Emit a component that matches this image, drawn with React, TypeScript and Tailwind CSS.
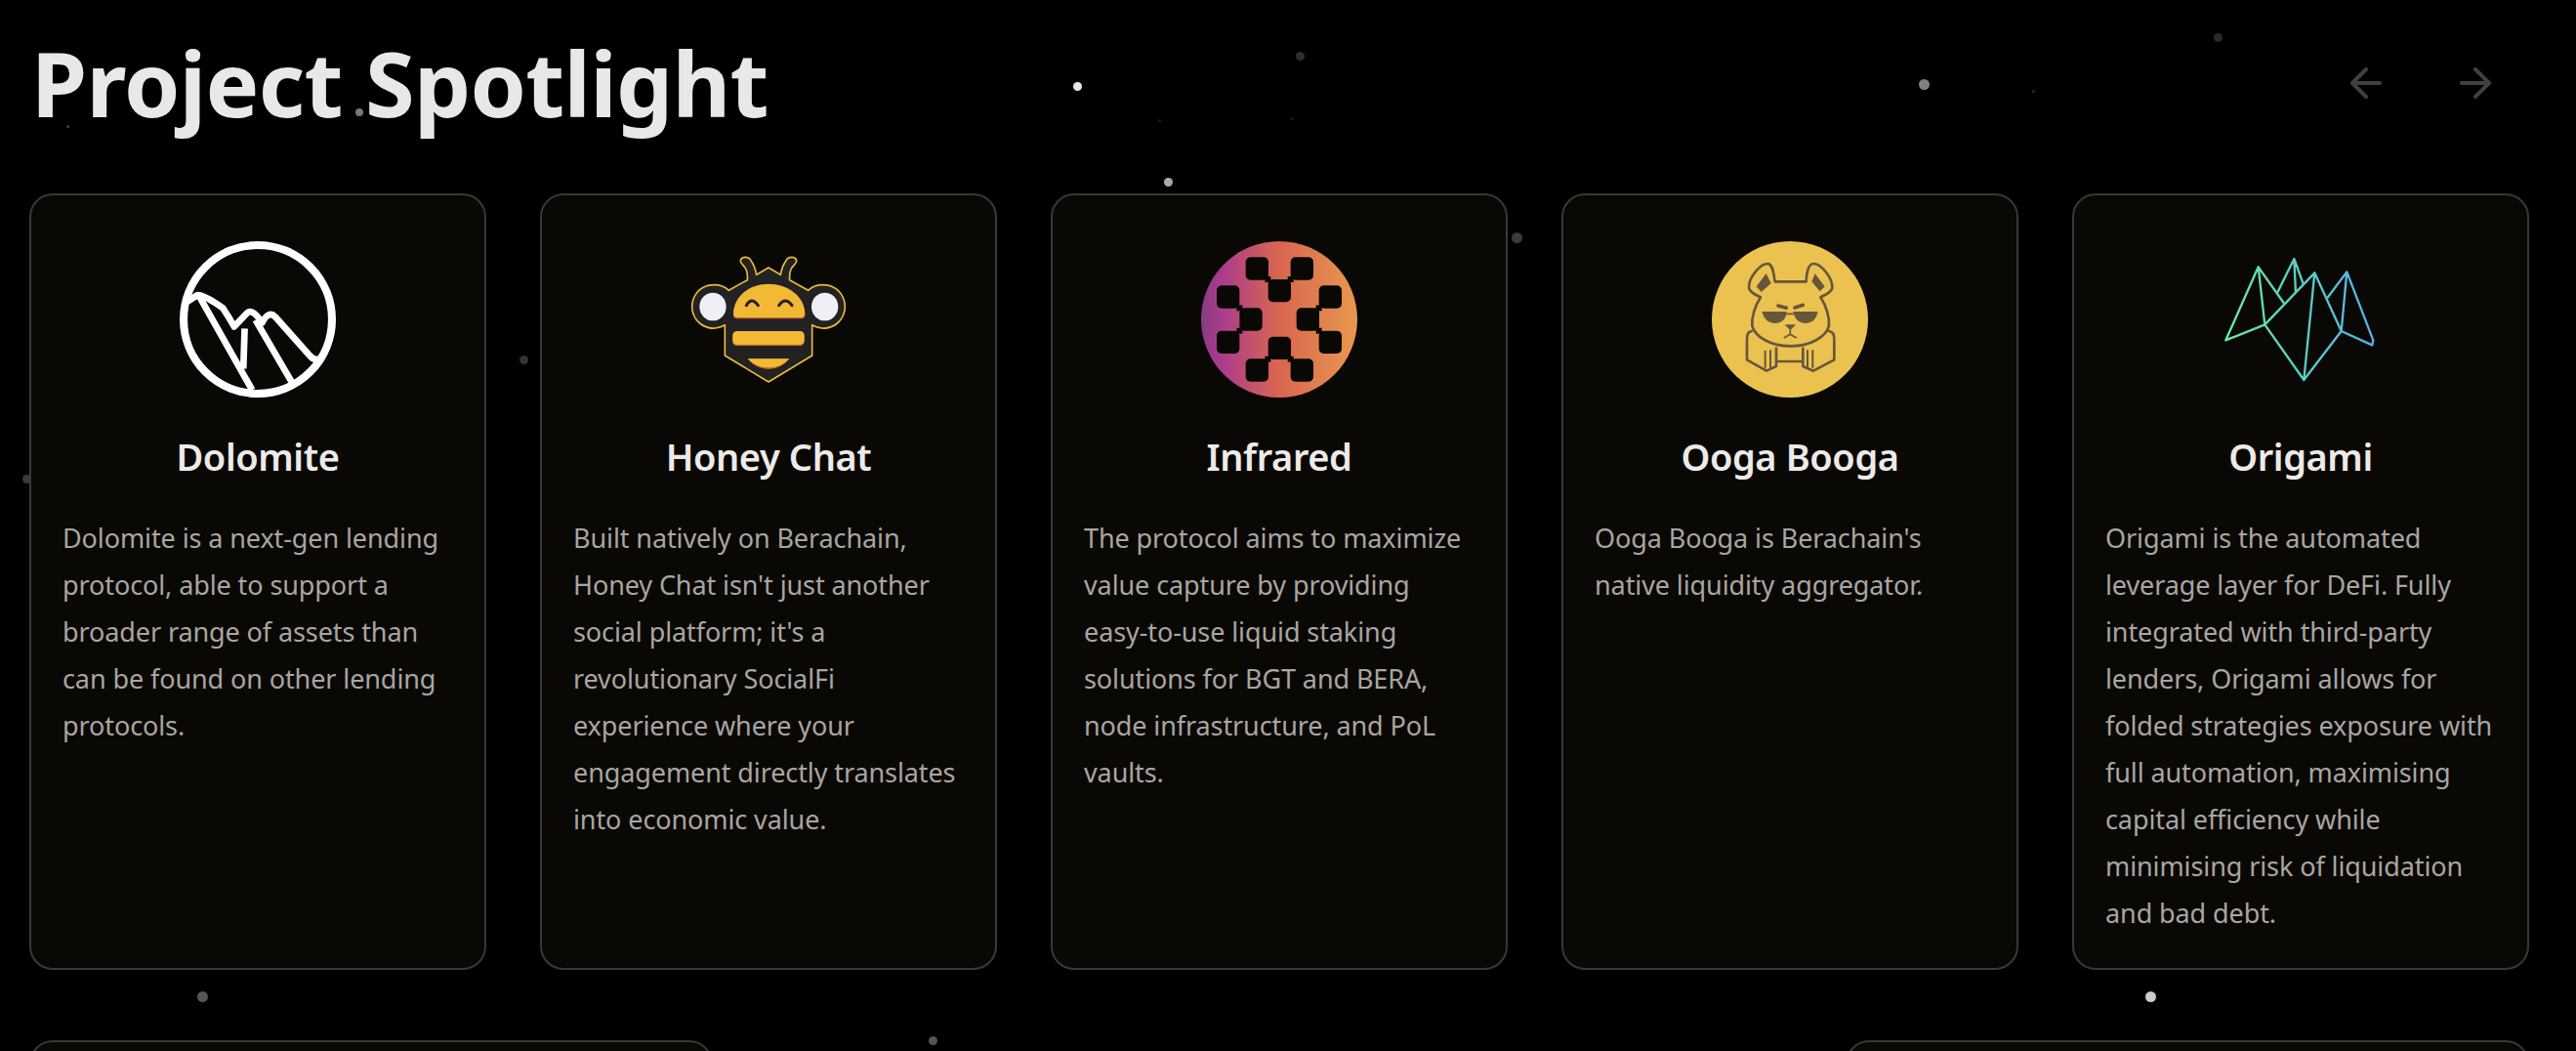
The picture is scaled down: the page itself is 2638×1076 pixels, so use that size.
import { ArrowLeft, ArrowRight } from "lucide-react";

const font = { fontFamily: '"Noto Sans", sans-serif' };

function Dolomite() {
  return (
    <svg viewBox="74 52 476 476" className="h-full w-full" fill="none" stroke="#fff" strokeLinecap="round" strokeLinejoin="round">
      <circle cx="312" cy="290" r="226" strokeWidth="24" />
      <path d="M100 234 L128 216 Q150 216 205 255 Q225 285 240 312 L280 270 Q296 256 325 300 Q345 262 365 282 L470 400 Q485 418 505 410" strokeWidth="20" />
      <path d="M135 222 L295 505 M272 318 L268 440 M305 292 L415 480" strokeWidth="20" strokeLinecap="butt" />
    </svg>
  );
}

function Bee() {
  return (
    <svg viewBox="50 21 480 480" className="h-full w-full">
      <path
        d="M290 102 L253 124 C250 105 243 90 236 80 C228 65 204 68 204 82 C204 90 215 95 220 105 C225 115 226 128 225 140 L168 172 C150 155 125 152 100 158 C70 168 55 195 55 225 C58 265 90 290 125 288 C140 286 150 282 156 278 L156 372 L290 453 L424 372 L424 278 C430 282 440 286 455 288 C490 290 522 265 525 225 C525 195 510 168 480 158 C455 152 430 155 412 172 L355 140 C354 128 355 115 360 105 C365 95 376 90 376 82 C376 68 352 65 344 80 C337 90 330 105 327 124 Z"
        fill="#222124"
        stroke="#e9bb35"
        strokeWidth="5"
        strokeLinejoin="round"
      />
      <ellipse cx="119" cy="222" rx="41" ry="43" fill="#eef0f6" />
      <ellipse cx="463" cy="222" rx="41" ry="43" fill="#eef0f6" />
      <path d="M182 250 C182 192 230 155 290 155 C350 155 402 192 402 250 Q400 259 390 259 L194 259 Q184 259 182 250 Z" fill="#c9651f" />
      <path d="M182 246 C182 190 230 152 290 152 C350 152 402 190 402 246 Q400 255 390 255 L194 255 Q184 255 182 246 Z" fill="#f2b935" />
      <path d="M222 218 Q238 190 258 218 M322 218 Q342 190 362 218" fill="none" stroke="#222124" strokeWidth="9" strokeLinecap="round" />
      <rect x="180" y="300" width="220" height="42" rx="13" fill="#c9651f" />
      <rect x="180" y="297" width="220" height="41" rx="13" fill="#f2b935" />
      <path d="M226 382 L354 382 Q330 414 290 414 Q250 414 226 382 Z" fill="#c9651f" />
      <path d="M226 382 L354 382 Q330 409 290 409 Q250 409 226 382 Z" fill="#f2b935" />
    </svg>
  );
}

function Infrared() {
  const blocks = [
    [197, 85], [335, 85], [266, 153], [108, 172], [422, 172], [178, 241],
    [353, 241], [108, 311], [422, 311], [266, 329], [197, 397], [335, 397],
  ];
  const joins = [
    [265, 153], [335, 153], [178, 241], [178, 311], [422, 241], [422, 311], [265, 398], [335, 398],
  ];
  return (
    <svg viewBox="60 36 480 480" className="h-full w-full">
      <defs>
        <linearGradient id="infra" x1="60" x2="540" y1="276" y2="276" gradientUnits="userSpaceOnUse">
          <stop offset="0" stopColor="#8a3a86" />
          <stop offset="0.14" stopColor="#ab3d8b" />
          <stop offset="0.5" stopColor="#d9664f" />
          <stop offset="1" stopColor="#e8984f" />
        </linearGradient>
      </defs>
      <circle cx="300" cy="276" r="240" fill="url(#infra)" />
      {blocks.map(([x, y]) => (
        <rect key={`${x}-${y}`} x={x} y={y} width="70" height="70" rx="15" fill="#0a0805" />
      ))}
      {joins.map(([x, y]) => (
        <rect key={`${x}-${y}`} x={x - 9} y={y - 9} width="18" height="18" fill="#0a0805" />
      ))}
    </svg>
  );
}

function Ooga() {
  return (
    <svg viewBox="68 36 480 480" className="h-full w-full">
      <circle cx="308" cy="276" r="240" fill="#ebc250" />
      <g fill="none" stroke="#67573a" strokeWidth="8" strokeLinejoin="round" strokeLinecap="round">
        <path d="M262 160 C258 135 255 105 240 105 C215 105 180 150 182 180 C185 190 200 200 218 208 C200 235 190 270 192 295 C200 330 250 358 310 358 C370 358 420 330 428 295 C430 270 420 235 402 208 C420 200 435 190 438 180 C440 150 405 105 380 105 C365 105 358 135 358 160 Z" />
        <path d="M190 312 C178 315 176 322 176 340 L176 400 L236 434 L266 420 L266 365 M428 312 C442 315 444 322 444 340 L444 400 L380 434 L348 420 L348 365 M266 405 L348 405" />
        <path d="M232 372 L232 425 M248 370 L248 425 M362 370 L362 425 M378 370 L378 425" strokeWidth="6" strokeLinecap="butt" />
        <path d="M272 234 L297 241 M348 232 L323 240" strokeWidth="11" />
        <path d="M298 259 L318 259" strokeWidth="5" />
        <path d="M309 310 L309 322 M291 332 L309 322 L327 332" strokeWidth="5" />
      </g>
      <g fill="#67573a">
        <path d="M235 135 L205 175 L220 192 L250 165 Z" />
        <path d="M385 135 L415 175 L400 190 L375 160 Z" />
        <path d="M222 252 L298 252 Q295 288 260 288 Q230 285 222 252 Z" />
        <path d="M394 252 L318 252 Q325 288 358 288 Q388 285 394 252 Z" />
        <path d="M292 292 L326 292 L309 310 Z" />
      </g>
    </svg>
  );
}

function Origami() {
  return (
    <svg viewBox="50 21 480 480" className="h-full w-full">
      <defs>
        <linearGradient id="ori" x1="60" x2="515" y1="260" y2="260" gradientUnits="userSpaceOnUse">
          <stop offset="0" stopColor="#66eaa2" />
          <stop offset="0.55" stopColor="#5accc6" />
          <stop offset="1" stopColor="#57aeea" />
        </linearGradient>
      </defs>
      <path
        d="M180 277 L60 325 L160 100 L180 277 L300 447 L415 297 L333 118 L180 277 M160 100 L240 213 M218 180 L270 75 L298 152 M270 75 L275 180 M333 118 L300 447 M372 195 L432 115 L513 325 L510 340 L415 297 L432 115"
        fill="none"
        stroke="url(#ori)"
        strokeWidth="7"
        strokeLinejoin="round"
      />
    </svg>
  );
}

const projects = [
  { name: "Dolomite", Logo: Dolomite, text: "Dolomite is a next-gen lending protocol, able to support a broader range of assets than can be found on other lending protocols." },
  { name: "Honey Chat", Logo: Bee, text: "Built natively on Berachain, Honey Chat isn't just another social platform; it's a revolutionary SocialFi experience where your engagement directly translates into economic value." },
  { name: "Infrared", Logo: Infrared, text: "The protocol aims to maximize value capture by providing easy-to-use liquid staking solutions for BGT and BERA, node infrastructure, and PoL vaults." },
  { name: "Ooga Booga", Logo: Ooga, text: "Ooga Booga is Berachain's native liquidity aggregator." },
  { name: "Origami", Logo: Origami, text: "Origami is the automated leverage layer for DeFi. Fully integrated with third-party lenders, Origami allows for folded strategies exposure with full automation, maximising capital efficiency while minimising risk of liquidation and bad debt." },
];

const dots: [number, number, number, string][] = [
  [1103, 88, 9, "#e8e8e8"], [1331, 57, 9, "#2e2e2e"], [1970, 86, 11, "#808080"], [2271, 38, 9, "#2a2a2a"],
  [1196, 186, 9, "#aaa"], [1553, 243, 11, "#3a3a3a"], [536, 368, 9, "#333"], [27, 490, 9, "#3a3a3a"],
  [368, 115, 8, "#777"], [69, 129, 3, "#444"], [2082, 93, 3, "#2a2a2a"], [1187, 123, 3, "#1c1c1c"], [1323, 121, 3, "#1c1c1c"],
  [207, 1020, 11, "#555"], [955, 1065, 9, "#555"], [2202, 1020, 11, "#ccc"],
];

export default function App() {
  return (
    <div className="relative h-[1076px] w-[2638px] overflow-hidden bg-black" style={font}>
      {dots.map(([x, y, s, c]) => (
        <div
          key={`${x}-${y}`}
          className="absolute rounded-full"
          style={{ left: x - s / 2, top: y - s / 2, width: s, height: s, backgroundColor: c }}
        />
      ))}
      <div className="relative flex flex-col pl-[30px] pr-[48px]">
        <div className="flex h-[198px] items-start justify-between pr-[31px]">
          <h1 className="pl-[2px] pt-[21px] text-[92px] font-bold leading-[128px] tracking-[-0.7px] text-[#e8e8e6]">Project Spotlight</h1>
          <div className="flex gap-[64px] pt-[61px] text-[#404040]">
            <ArrowLeft size={48} strokeWidth={2} />
            <ArrowRight size={48} strokeWidth={2} />
          </div>
        </div>
        <div className="flex justify-between">
          {projects.map(({ name, Logo, text }) => (
            <div key={name} className="flex h-[795px] w-[468px] flex-col items-stretch rounded-[24px] border-2 border-[#3a3835] bg-[#0a0805] px-[32px] pt-[47px]">
              <div className="mx-auto h-[160px] w-[160px]">
                <Logo />
              </div>
              <h2 className="mt-[32px] text-center text-[38px] font-semibold leading-[56px] tracking-[-0.4px] text-[#ecebe8]">{name}</h2>
              <p className="mt-[32px] text-[27px] leading-[48px] tracking-[-0.1px] text-[#a8a6a2]">{text}</p>
            </div>
          ))}
        </div>
        <div className="mt-[72px] flex justify-between">
          <div className="h-[120px] w-[700px] rounded-[24px] border-2 border-[#3a3835] bg-[#0a0805]" />
          <div className="h-[120px] w-[700px] rounded-[24px] border-2 border-[#3a3835] bg-[#0a0805]" />
        </div>
      </div>
    </div>
  );
}
